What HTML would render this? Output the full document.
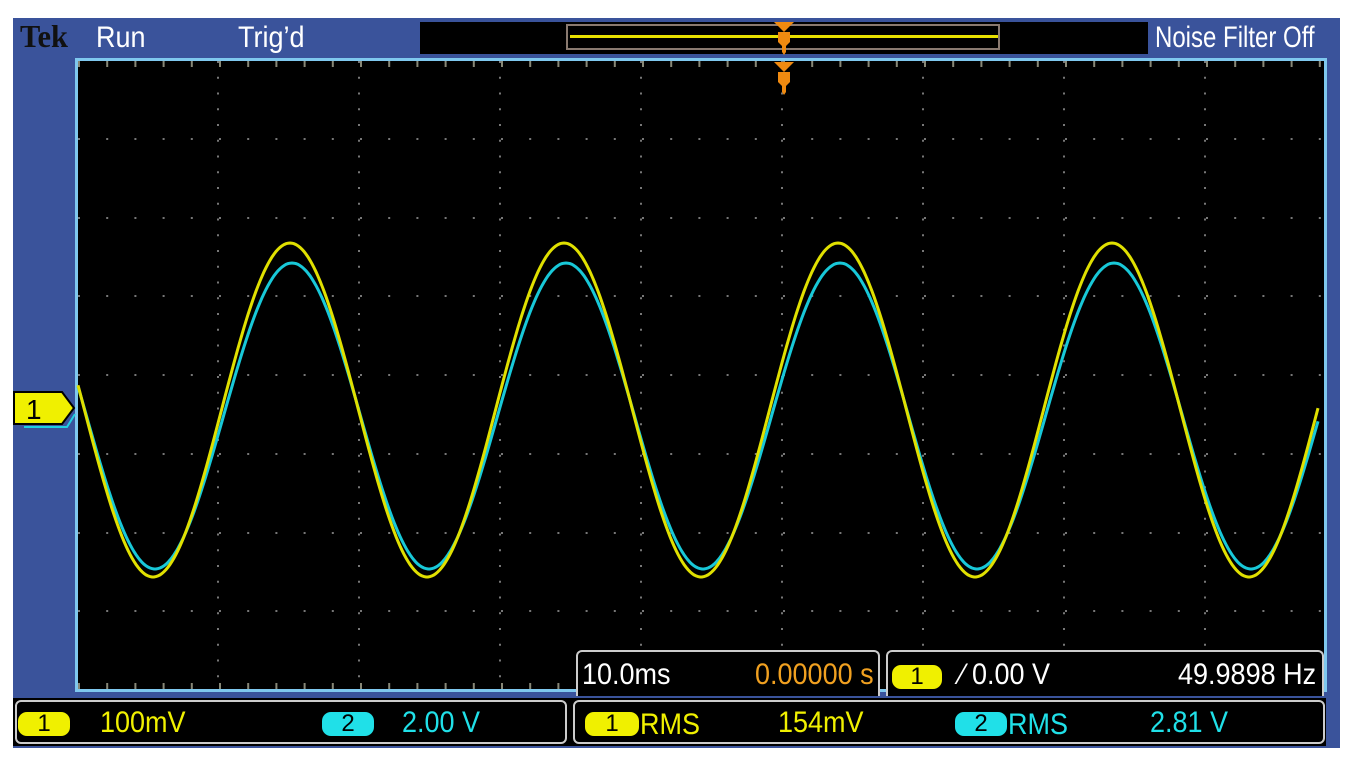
<!DOCTYPE html><html><head><style>
body{margin:0;width:1370px;height:759px;background:#fff;position:relative;overflow:hidden;font-family:"Liberation Sans",sans-serif}
.a{position:absolute}
.t{position:absolute;white-space:nowrap;transform-origin:0 0;transform:scaleX(.9);font-size:30px;line-height:30px}
.b{position:absolute;border-radius:9px;text-align:center;color:#000;font-size:24px;line-height:24px;height:24px}
</style></head><body>
<div class="a" style="left:13px;top:18px;width:1327px;height:730px;background:#3a539b"></div>
<div class="a" style="left:420px;top:22px;width:728px;height:32px;background:#000"></div>
<div class="a" style="left:566px;top:24px;width:434px;height:26px;border:2px solid #8a7a70;box-sizing:border-box"></div>
<div class="a" style="left:570px;top:35px;width:428px;height:3px;background:#e8e000"></div>
<div class="t" style="left:20px;top:21px;font-family:'Liberation Serif',serif;font-weight:bold;color:#111;font-size:32px;transform:scaleX(.95)">Tek</div>
<div class="t" style="left:96px;top:23px;color:#fff">Run</div>
<div class="t" style="left:238px;top:23px;color:#fff">Trig’d</div>
<div class="t" style="left:1155px;top:23px;color:#fff;transform:scaleX(.8)">Noise Filter Off</div>
<div class="a" style="left:75px;top:58px;width:1252px;height:634px;background:#7fc8ee"></div>
<div class="a" style="left:78px;top:61px;width:1246px;height:628px;background:#000"></div>
<svg class="a" style="left:0;top:0" width="1370" height="759" id="s"></svg>
<div class="a" style="left:13px;top:698px;width:1313px;height:48px;background:#000"></div>
<div class="a" style="left:15px;top:700px;width:552px;height:44px;border:2px solid #ccc;border-radius:6px;box-sizing:border-box"></div>
<div class="a" style="left:573px;top:700px;width:752px;height:44px;border:2px solid #ccc;border-radius:6px;box-sizing:border-box"></div>
<div class="a" style="left:576px;top:650px;width:304px;height:46px;background:#000;border:2px solid #ccc;border-bottom:none;border-radius:6px 6px 0 0;box-sizing:border-box"></div>
<div class="a" style="left:886px;top:650px;width:438px;height:46px;background:#000;border:2px solid #ccc;border-bottom:none;border-radius:6px 6px 0 0;box-sizing:border-box"></div>
<div class="t" style="left:582px;top:660px;color:#fff">10.0ms</div>
<div class="t" style="left:755px;top:660px;color:#f0a020">0.00000 s</div>
<div class="b" style="left:892px;top:665px;width:50px;background:#f0f000">1</div>
<div class="t" style="left:960px;top:660px;color:#fff">⁄ 0.00 V</div>
<div class="t" style="left:1178px;top:660px;color:#fff">49.9898 Hz</div>
<div class="b" style="left:18px;top:712px;width:52px;background:#f0f000">1</div>
<div class="t" style="left:100px;top:708px;color:#f0f000">100mV</div>
<div class="b" style="left:322px;top:712px;width:52px;background:#20e0e8">2</div>
<div class="t" style="left:402px;top:708px;color:#20e0e8">2.00 V</div>
<div class="b" style="left:585px;top:712px;width:54px;background:#f0f000">1</div>
<div class="t" style="left:640px;top:710px;color:#f0f000">RMS</div>
<div class="t" style="left:778px;top:708px;color:#f0f000">154mV</div>
<div class="b" style="left:955px;top:712px;width:52px;background:#20e0e8">2</div>
<div class="t" style="left:1008px;top:710px;color:#20e0e8">RMS</div>
<div class="t" style="left:1150px;top:708px;color:#20e0e8">2.81 V</div>
<svg class="a" style="left:12px;top:390px" width="66" height="40"><polygon points="2,2 50,2 62,18 50,34 2,34" fill="#f0f000" stroke="#000" stroke-width="2"/><polyline points="12,37 55,37 63,24" fill="none" stroke="#20d0e0" stroke-width="2"/><text x="14" y="29" font-size="28" font-family="Liberation Sans" fill="#000">1</text></svg>
<script>
var s=document.getElementById('s'),h='';
for(var k=0;k<8;k++){var x=218+141*k;for(var y=61;y<690;y+=15.75)h+='<rect x="'+(x-1)+'" y="'+y+'" width="2" height="2" fill="#777"/>';}
[139,218,296,375,454,533,611].forEach(function(y){for(var x=78;x<1324;x+=28.2)h+='<rect x="'+x+'" y="'+(y-1)+'" width="2" height="2" fill="#777"/>';});
for(var x=78;x<1324;x+=28.2){h+='<rect x="'+x+'" y="61" width="2" height="6" fill="#887"/><rect x="'+x+'" y="683" width="2" height="6" fill="#887"/>';}
function p(c,a,ph,col,w){var d='M';for(var x=78;x<=1318;x+=2){d+=x+','+(c-a*Math.cos(2*Math.PI*(x-ph)/274)).toFixed(1)+' ';}return '<path d="'+d+'" fill="none" stroke="'+col+'" stroke-width="'+w+'"/>';}
h+=p(416,153,292,'#18c8d8',3);h+=p(410,167,290,'#e0e000',3);
h+='<polygon points="774,22 794,22 784,32" fill="#f08a10"/><path d="M778,32h12v10l-4,4v6l-2,3l-2,-3v-6l-4,-4z" fill="#f08a10"/>';
h+='<polygon points="774,62 794,62 784,72" fill="#f08a10"/><path d="M778,72h12v10l-4,4v6l-2,3l-2,-3v-6l-4,-4z" fill="#f08a10"/>';
s.innerHTML=h;
</script>
</body></html>
